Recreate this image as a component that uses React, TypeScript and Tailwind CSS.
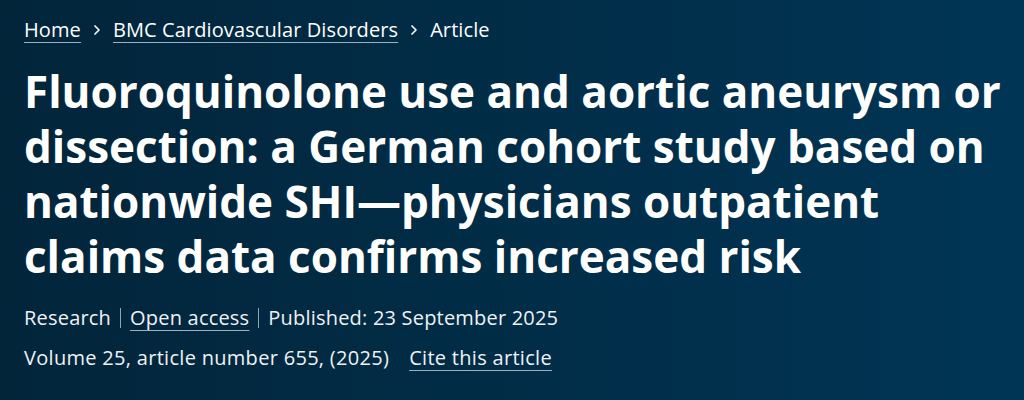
import { ChevronRight } from "lucide-react"

const crumbs = [
  { label: "Home", link: true },
  { label: "BMC Cardiovascular Disorders", link: true },
  { label: "Article", link: false },
]

const titleLines = [
  "Fluoroquinolone use and aortic aneurysm or",
  "dissection: a German cohort study based on",
  "nationwide SHI\u2014physicians outpatient",
  "claims data confirms increased risk",
]

function Sep() {
  return <span className="mx-[9px] inline-block h-[20px] w-px bg-[#8fa3b1]" />
}

export default function App() {
  return (
    <div
      className="h-[400px] w-[1024px] overflow-hidden bg-gradient-to-r from-[#02253a] to-[#003555] px-6 pt-[14px] text-white"
      style={{ fontFamily: "'Open Sans', Lato, sans-serif" }}
    >
      <nav className="flex items-center text-[20px] leading-[32px] tracking-[0.1px]">
        {crumbs.map((c, i) => (
          <span key={c.label} className="flex items-center">
            <span
              className={
                c.link
                  ? "underline decoration-[#9fb0bd] decoration-1 underline-offset-[5px]"
                  : ""
              }
            >
              {c.label}
            </span>
            {i < crumbs.length - 1 && (
              <ChevronRight className="mx-[8px] h-4 w-4" strokeWidth={2.5} />
            )}
          </span>
        ))}
      </nav>

      <h1 className="mt-[18px] text-[44px] font-bold leading-[55px]">
        {titleLines.map((l) => (
          <span key={l} className="block whitespace-nowrap">
            {l}
          </span>
        ))}
      </h1>

      <div className="mt-[18px] flex items-center text-[20px] leading-[32px] tracking-[0.2px] text-[#eef2f5]">
        <span>Research</span>
        <Sep />
        <span className="underline decoration-[#9fb0bd] decoration-1 underline-offset-[5px]">
          Open access
        </span>
        <Sep />
        <span>Published: 23 September 2025</span>
      </div>
      <div className="mt-[8px] flex items-center gap-5 text-[20px] leading-[32px] tracking-[0.3px] text-[#eef2f5]">
        <span>Volume 25, article number 655, (2025)</span>
        <span className="underline decoration-[#9fb0bd] decoration-1 underline-offset-[5px]">
          Cite this article
        </span>
      </div>
    </div>
  )
}
